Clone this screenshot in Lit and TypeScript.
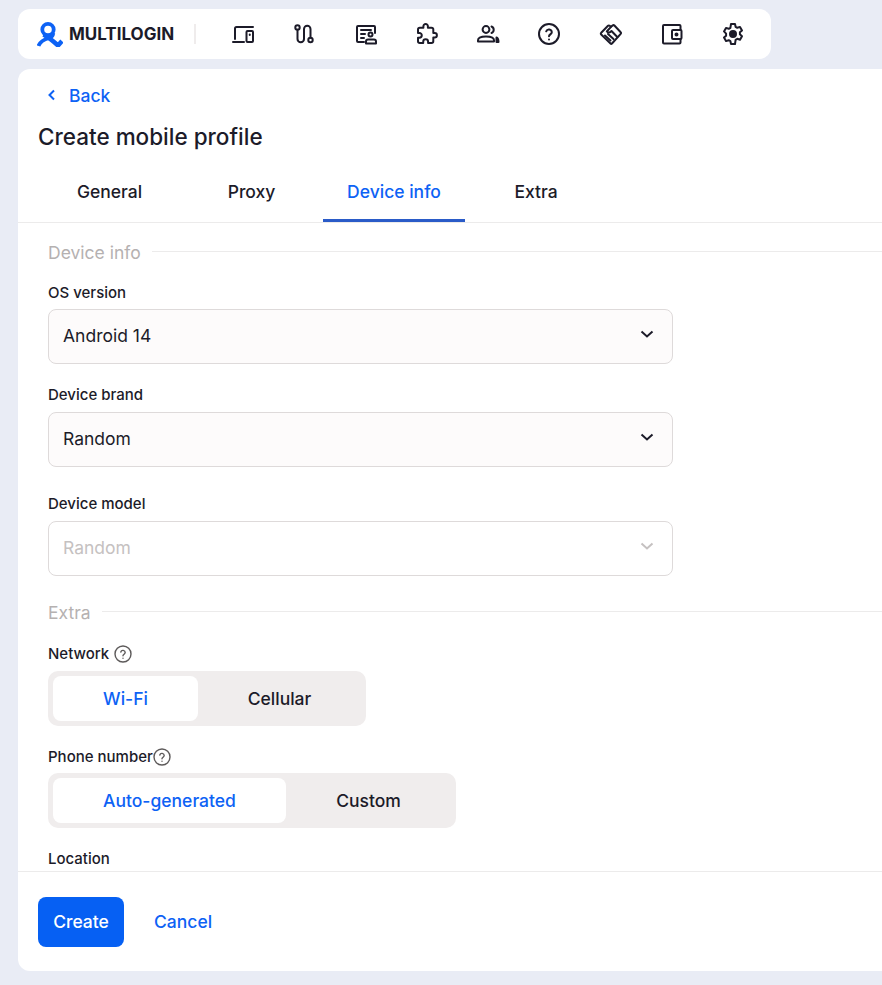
import { LitElement, html, css, svg } from 'lit';
import { customElement, property } from 'lit/decorators.js';

const navIcons = [
  svg`<path d="M22 5H5.500A1.500 1.500 0 0 0 4 6.500V17"/><path d="M2 20h11"/><rect x="15.500" y="9" width="6.500" height="11" rx="1"/><path d="M18.750 12.500v.5"/>`,
  svg`<circle cx="5.500" cy="5.500" r="2.200"/><circle cx="18.500" cy="18" r="2.200"/><path d="M5.500 7.700V17a3.250 3.250 0 0 0 6.500 0V7a3.250 3.250 0 0 1 6.500 0v8.800"/>`,
  svg`<path d="M21 11V5a1 1 0 0 0-1-1H4a1 1 0 0 0-1 1v14a1 1 0 0 0 1 1h6"/><path d="M7 8h10M7 12h4M7 16h3"/><circle cx="16.500" cy="12.500" r="2"/><path d="M12 21.500v-2a2 2 0 0 1 2-2h6a2 2 0 0 1 2 2v2z"/>`,
  svg`<path transform="translate(1.200 1.200) scale(.9)" stroke-width="2.200" d="M20.500 11H19V7c0-1.100-.9-2-2-2h-4V3.500C13 2.120 11.880 1 10.500 1S8 2.120 8 3.500V5H4c-1.100 0-1.990.9-1.990 2v3.800H3.500c1.490 0 2.700 1.210 2.700 2.700s-1.210 2.700-2.700 2.700H2V20c0 1.100.9 2 2 2h3.800v-1.500c0-1.490 1.210-2.700 2.700-2.700 1.490 0 2.700 1.210 2.700 2.700V22H17c1.100 0 2-.9 2-2v-4h1.500c1.380 0 2.500-1.120 2.500-2.500S21.880 11 20.500 11z"/>`,
  svg`<circle cx="10" cy="7.500" r="3.400"/><path d="M2 19.500v-1.200C2 15.500 5.500 14.500 10 14.500s8 1 8 3.800v1.200z"/><path d="M15.500 4.500a3.500 3.500 0 0 1 0 6.500"/><path d="M20.500 15.500c1.500.8 2 2 2 4.500h-2z" fill="currentColor"/>`,
  svg`<circle cx="12" cy="12" r="10"/><path d="M9.200 9.300a2.900 2.900 0 0 1 5.600.9c0 1.900-2.800 2.400-2.800 4"/><path d="M12 17.400v.2"/>`,
  svg`<path d="M11.500 21.500 2.200 12.500a1.200 1.200 0 0 1 0-1.800L9 3.800a1.200 1.200 0 0 1 1.700 0l1.300 1 1.800-1.400a1.200 1.200 0 0 1 1.600.1l6.300 6.700a1.200 1.200 0 0 1 0 1.700l-8.700 9.600a1.100 1.100 0 0 1-1.500 0z"/><path d="M12 4.800 7.800 9.500c1.300 1.700 3 1.300 4.700-.5l5.800 6"/><path d="M6 13.500l5.500 5M9 12l5.500 5"/>`,
  svg`<path d="M20.500 8V4a1 1 0 0 0-1-1H4a1 1 0 0 0-1 1v16.500a1 1 0 0 0 1 1h15.500a1 1 0 0 0 1-1V17"/><rect x="12" y="8" width="9.500" height="9" rx="1"/><circle cx="16.500" cy="12.500" r="1" fill="currentColor"/>`,
  svg`<path d="M10 2h4l.6 2.800 1.700 1 2.700-.9 2 3.500-2.100 1.900v2l2.100 1.900-2 3.500-2.700-.9-1.700 1L14 22h-4l-.6-2.800-1.700-1-2.700.9-2-3.500 2.100-1.900v-2L3 9.400l2-3.500 2.700.9 1.700-1z"/><circle cx="12" cy="12" r="3" fill="currentColor"/>`,
];

@customElement('help-icon')
export class HelpIcon extends LitElement {
  static styles = css`
    :host {
      display: inline-flex;
    }
    svg {
      width: 18px;
      height: 18px;
      fill: none;
      stroke: #5d5a5a;
      stroke-width: 1.400;
      stroke-linecap: round;
    }
  `;

  render() {
    return html`<svg viewBox="0 0 18 18">
      <circle cx="9" cy="9" r="8"/>
      <path d="M6.800 7a2.250 2.250 0 0 1 4.400.6c0 1.500-2.200 1.800-2.200 3.200"/>
      <path d="M9 13.200v.1"/>
    </svg>`;
  }
}

@customElement('select-field')
export class SelectField extends LitElement {
  static styles = css`
    :host {
      display: block;
    }
    label {
      display: block;
      font-size: 15px;
      font-weight: 500;
      line-height: 20px;
      margin-bottom: 7px;
      color: #1c1b29;
    }
    :host([tight]) label {
      margin-bottom: 6px;
    }
    .box {
      display: flex;
      align-items: center;
      justify-content: space-between;
      box-sizing: border-box;
      width: 625px;
      height: 55px;
      padding: 0 17px 3px 14px;
      background: #fdfbfb;
      border: 1px solid #dedada;
      border-radius: 8px;
      font-size: 17.500px;
      color: #1c1b29;
    }
    .box svg {
      width: 16px;
      height: 16px;
      fill: none;
      stroke: currentColor;
      stroke-width: 2;
      margin-top: -2px;
    }
    :host([disabled]) .box {
      background: #fff;
      color: #c5c1c1;
    }
  `;

  @property() label = '';
  @property() value = '';
  @property({ type: Boolean, reflect: true }) disabled = false;

  render() {
    return html`
      <label>${this.label}</label>
      <div class="box">
        <span>${this.value}</span>
        <svg viewBox="0 0 16 16"><path d="M2.500 5.500 8 10.500l5.500-5"/></svg>
      </div>
    `;
  }
}

@customElement('app-root')
export class AppRoot extends LitElement {
  static styles = css`
    :host {
      display: flex;
      flex-direction: column;
      height: 985px;
      overflow: hidden;
      background: #e9ecf5;
      font-family: Inter, 'Liberation Sans', sans-serif;
      color: #1c1b29;
    }

    .topbar {
      display: flex;
      align-items: center;
      box-sizing: border-box;
      width: 753px;
      height: 50px;
      margin: 9px 0 10px 18px;
      padding-left: 19px;
      background: #fff;
      border-radius: 12px;
      flex: none;
    }
    .logo {
      display: flex;
      align-items: center;
      gap: 6px;
      width: 157px;
      height: 20px;
      border-right: 2px solid #efecec;
      font-size: 17px;
      font-weight: 700;
    }
    .logo svg {
      width: 26px;
      height: 26px;
      flex: none;
    }
    .nav {
      display: flex;
      gap: 37.250px;
      margin-left: 35px;
    }
    .nav svg {
      width: 24px;
      height: 24px;
      fill: none;
      stroke: currentColor;
      stroke-width: 2;
      stroke-linecap: round;
      stroke-linejoin: round;
    }

    .card {
      flex: 1;
      display: flex;
      flex-direction: column;
      min-height: 0;
      margin: 0 0 14px 18px;
      background: #fff;
      border-radius: 12px 0 0 12px;
    }
    .head {
      padding: 14px 20px 0;
      flex: none;
    }
    .back {
      display: flex;
      align-items: center;
      gap: 10px;
      padding-left: 7px;
      height: 24px;
      font-size: 17.500px;
      font-weight: 500;
      color: #0d62f5;
    }
    .back svg {
      width: 14px;
      height: 14px;
      fill: none;
      stroke: currentColor;
      stroke-width: 2;
    }
    h1 {
      margin: 15px 0 0;
      font-size: 22.500px;
      font-weight: 500;
      line-height: 30px;
    }
    .tabs {
      display: flex;
      margin: 10px 0 0 1px;
    }
    .tab {
      width: 142px;
      height: 60px;
      box-sizing: border-box;
      padding-top: 18px;
      text-align: center;
      font-size: 17.500px;
      font-weight: 500;
      line-height: 24px;
    }
    .tab.left {
      padding-right: 1px;
    }
    .tab.active {
      color: #0d62f5;
      border-bottom: 3px solid #2a5bc8;
    }

    .body {
      flex: 1;
      min-height: 0;
      overflow: hidden;
      border-top: 1px solid #ecebeb;
      padding: 17px 0 0 30px;
    }
    .section {
      display: flex;
      align-items: center;
      gap: 11px;
      height: 24px;
      font-size: 17.500px;
      color: #b5b1b1;
    }
    .section::after {
      content: '';
      flex: 1;
      height: 1px;
      margin-top: -1px;
      background: #ecebeb;
    }
    .label {
      display: flex;
      align-items: center;
      gap: 5px;
      font-size: 15px;
      font-weight: 500;
      line-height: 20px;
    }
    .label.tight {
      gap: 0;
    }
    .seg {
      display: flex;
      box-sizing: border-box;
      height: 55px;
      margin-top: 7px;
      padding: 5px;
      background: #f0eded;
      border-radius: 10px;
      font-size: 17.500px;
      font-weight: 500;
    }
    .seg.low {
      margin-top: 6px;
    }
    .seg span {
      display: flex;
      align-items: center;
      justify-content: center;
      border-radius: 8px;
    }
    .seg .on {
      background: #fff;
      color: #0d62f5;
    }

    .footer {
      display: flex;
      align-items: center;
      gap: 30px;
      flex: none;
      height: 100px;
      padding: 1px 20px 0;
      border-top: 1px solid #ecebeb;
      box-sizing: border-box;
      font-size: 17.500px;
      font-weight: 500;
    }
    .create {
      width: 86px;
      height: 50px;
      box-sizing: border-box;
      padding-bottom: 2px;
      display: flex;
      align-items: center;
      justify-content: center;
      background: #0660f3;
      border-radius: 8px;
      color: #fff;
    }
    .cancel {
      color: #0d62f5;
      margin-top: -2px;
    }
  `;

  render() {
    return html`
      <header class="topbar">
        <div class="logo">
          <svg viewBox="0 0 26 26" fill="none" stroke="#0d62f5" stroke-width="3.800">
            <circle cx="11" cy="8.500" r="5.700"/>
            <path d="M1.500 25C3 20.500 7 18.500 12 17c2.500-.8 4-2.800 4.300-5"/>
            <path stroke-width="4.600" d="M6.500 13.500C11 16 15 19 21 24.500L25 20"/>
          </svg>
          <span>MULTILOGIN</span>
        </div>
        <nav class="nav">
          ${navIcons.map((icon) => html`<svg viewBox="0 0 24 24">${icon}</svg>`)}
        </nav>
      </header>

      <main class="card">
        <div class="head">
          <div class="back">
            <svg viewBox="0 0 14 14"><path d="M9 2.500 4.500 7 9 11.500"/></svg>
            <span>Back</span>
          </div>
          <h1>Create mobile profile</h1>
          <div class="tabs">
            <div class="tab left">General</div>
            <div class="tab left">Proxy</div>
            <div class="tab active">Device info</div>
            <div class="tab">Extra</div>
          </div>
        </div>

        <div class="body">
          <div class="section">Device info</div>
          <select-field tight style="margin-top:19px" label="OS version" value="Android 14"></select-field>
          <select-field style="margin-top:21px" label="Device brand" value="Random"></select-field>
          <select-field style="margin-top:27px" label="Device model" value="Random" disabled></select-field>
          <div class="section" style="margin-top:24px">Extra</div>
          <div class="label" style="margin-top:20px">Network <help-icon></help-icon></div>
          <div class="seg" style="width:318px">
            <span class="on" style="width:145px">Wi-Fi</span>
            <span style="width:163px">Cellular</span>
          </div>
          <div class="label tight" style="margin-top:21px">Phone number<help-icon></help-icon></div>
          <div class="seg low" style="width:408px">
            <span class="on" style="width:233px">Auto-generated</span>
            <span style="width:165px">Custom</span>
          </div>
          <div class="label" style="margin-top:21px">Location</div>
        </div>

        <footer class="footer">
          <div class="create">Create</div>
          <div class="cancel">Cancel</div>
        </footer>
      </main>
    `;
  }
}
